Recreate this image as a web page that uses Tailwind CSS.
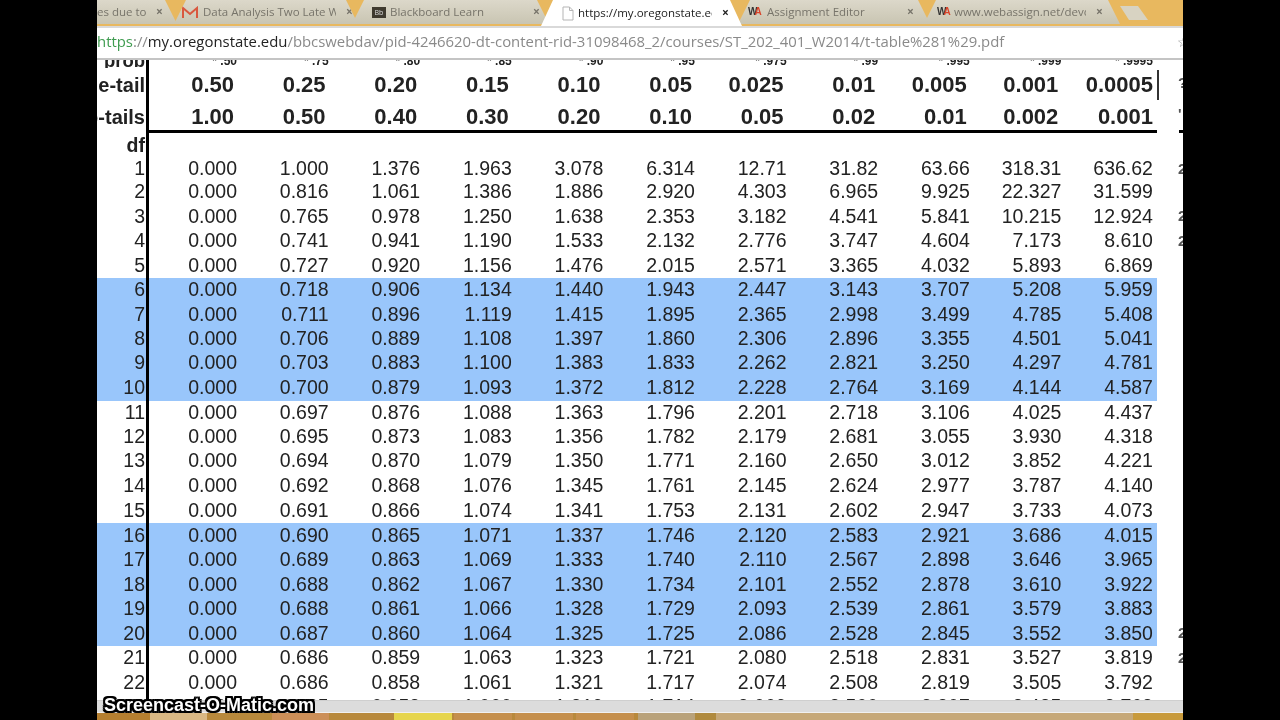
<!DOCTYPE html>
<html lang="en">
<head>
    <meta charset="UTF-8">
    <title>t-table</title>
    <script src="https://cdn.jsdelivr.net/npm/@tailwindcss/browser@4"></script>
</head>
<body class="bg-black h-screen w-screen overflow-hidden font-['Liberation_Sans',sans-serif]">
<main class="relative w-[1086px] h-[720px] ml-[97px] bg-white flex flex-col overflow-hidden blur-[0.35px]">

    <!-- tab strip -->
    <header class="relative h-[26px] shrink-0 bg-[#e8b85f] flex overflow-hidden font-['Open_Sans',sans-serif] text-[11.5px] text-[#77746a] whitespace-nowrap">
        <div class="w-[80px] h-[24px] shrink-0 bg-gradient-to-b from-[#dcd8ca] to-[#c9c5b2] [clip-path:polygon(0_0,68px_0,80px_100%,0_100%)] flex items-center">
            <span class="w-[49px] overflow-hidden">es due to</span>
            <span class="ml-[10px] font-bold text-[12px]">×</span>
        </div>
        <div class="w-[184px] h-[24px] -ml-[3px] shrink-0 bg-gradient-to-b from-[#dcd8ca] to-[#c9c5b2] [clip-path:polygon(0_100%,12px_0,172px_0,184px_100%)] flex items-center">
            <svg class="ml-[8px] w-[16px] h-[13px] shrink-0" viewBox="0 0 16 13"><path d="M1 12V2l7 6 7-6v10" fill="none" stroke="#d9583f" stroke-width="2"/></svg>
            <span class="ml-[5px] w-[133px] overflow-hidden">Data Analysis Two Late W</span>
            <span class="ml-[10px] font-bold text-[12px]">×</span>
        </div>
        <div class="w-[197px] h-[24px] -ml-[6px] shrink-0 bg-gradient-to-b from-[#dcd8ca] to-[#c9c5b2] [clip-path:polygon(0_100%,12px_0,185px_0,197px_100%)] flex items-center">
            <span class="ml-[20px] w-[14px] h-[11px] shrink-0 bg-[#3f3a2f] text-[7px] leading-[11px] text-[#ddd] text-center">Bb</span>
            <span class="ml-[4px] w-[143px]">Blackboard Learn</span>
            <span class="font-bold text-[12px]">×</span>
        </div>
        <div class="relative z-10 w-[201px] h-[26px] -ml-[8px] shrink-0 bg-white [clip-path:polygon(0_100%,12px_0,189px_0,201px_100%)] flex items-center text-[#222]">
            <svg class="ml-[21px] w-[12px] h-[15px] shrink-0" viewBox="0 0 12 15"><path d="M1 1h6.5L11 4.5V14H1zM7.5 1v3.500H11" fill="#fff" stroke="#b5b5b5"/></svg>
            <span class="ml-[4px] w-[134px] overflow-hidden">https://my.oregonstate.ec</span>
            <span class="ml-[10px] font-bold text-[12px]">×</span>
        </div>
        <div class="w-[192px] h-[24px] -ml-[4px] shrink-0 bg-gradient-to-b from-[#dcd8ca] to-[#c9c5b2] [clip-path:polygon(0_100%,12px_0,180px_0,192px_100%)] flex items-center">
            <span class="ml-[10px] w-[15px] shrink-0 font-['Liberation_Sans'] font-bold text-[10px] leading-none"><span class="text-[#333]">W</span><span class="-ml-[3px] text-[#d9452b]">A</span></span>
            <span class="ml-[4px] w-[140px]">Assignment Editor</span>
            <span class="font-bold text-[12px]">×</span>
        </div>
        <div class="w-[196px] h-[24px] -ml-[6px] shrink-0 bg-gradient-to-b from-[#dcd8ca] to-[#c9c5b2] [clip-path:polygon(0_100%,12px_0,184px_0,196px_100%)] flex items-center">
            <span class="ml-[13px] w-[15px] shrink-0 font-['Liberation_Sans'] font-bold text-[10px] leading-none"><span class="text-[#333]">W</span><span class="-ml-[3px] text-[#d9452b]">A</span></span>
            <span class="ml-[2px] w-[132px] overflow-hidden">www.webassign.net/devo</span>
            <span class="ml-[10px] font-bold text-[12px]">×</span>
        </div>
        <div class="w-[28px] h-[14px] mt-[6px] shrink-0 bg-[#d8d3c2] [clip-path:polygon(0_0,18px_0,28px_100%,9px_100%)]"></div>
    </header>

    <!-- address bar -->
    <div class="relative h-[34px] shrink-0 bg-white border-t-[2px] border-t-[#d9d9d9] border-b-[2px] border-b-[#c4c4c4] flex items-center pb-[3px] font-['Open_Sans',sans-serif] text-[14.9px] text-[#8a8a8a] whitespace-nowrap">
        <span><span class="text-[#3f9c50]">https</span>://<span class="text-[#222]">my.oregonstate.edu</span>/bbcswebdav/pid-4246620-dt-content-rid-31098468_2/courses/ST_202_401_W2014/t-table%281%29.pdf</span>
        <span class="absolute left-[1080px] text-[14px] text-[#999]">☆</span>
    </div>

    <!-- pdf page, rows are added by the script below -->
    <section id="page" class="h-[640px] shrink-0 overflow-hidden text-[#222]"></section>

    <!-- pdf viewer bottom edge + windows taskbar -->
    <div class="h-[13px] shrink-0 bg-[#dcdcdc] border-t border-t-[#cfcfcf] border-b border-b-[#f0f0f0]"></div>
    <footer class="h-[7px] shrink-0 bg-[#b8893c] flex">
        <div class="w-[53px] bg-[#b57f30]"></div>
        <div class="w-[57px] bg-[#d9b884]"></div>
        <div class="w-[65px]"></div>
        <div class="w-[57px] bg-[#cc8f58]"></div>
        <div class="w-[65px]"></div>
        <div class="w-[58px] bg-[#e6d54c]"></div>
        <div class="w-[58px] ml-[2px] bg-[#c58f4c]"></div>
        <div class="w-[58px] ml-[3px] bg-[#c58f4c]"></div>
        <div class="w-[58px] ml-[3px] bg-[#c58f4c]"></div>
        <div class="w-[57px] ml-[4px] bg-[#b9a27a]"></div>
        <div class="w-[21px] bg-[#b08a3e]"></div>
        <div class="flex-1 bg-[#c6a878]"></div>
        <div class="w-[50px] bg-[#c89a3c]"></div>
    </footer>

    <!-- stray table border next to 0.0005 -->
    <div class="absolute left-[1060px] top-[70px] w-[2px] h-[30px] bg-[#333]"></div>

    <div class="absolute left-[7px] top-[697px] font-bold text-[18px] leading-[17px] text-white [text-shadow:-2px_0_0_#000,2px_0_0_#000,0_-2px_0_#000,0_2px_0_#000,-2px_-2px_0_#000,2px_-2px_0_#000,-2px_2px_0_#000,2px_2px_0_#000]">Screencast-O-Matic.com</div>
</main>

<script>
const rows = [
    ['1','0.000','1.000','1.376','1.963','3.078','6.314','12.71','31.82','63.66','318.31','636.62'],
    ['2','0.000','0.816','1.061','1.386','1.886','2.920','4.303','6.965','9.925','22.327','31.599'],
    ['3','0.000','0.765','0.978','1.250','1.638','2.353','3.182','4.541','5.841','10.215','12.924'],
    ['4','0.000','0.741','0.941','1.190','1.533','2.132','2.776','3.747','4.604','7.173','8.610'],
    ['5','0.000','0.727','0.920','1.156','1.476','2.015','2.571','3.365','4.032','5.893','6.869'],
    ['6','0.000','0.718','0.906','1.134','1.440','1.943','2.447','3.143','3.707','5.208','5.959'],
    ['7','0.000','0.711','0.896','1.119','1.415','1.895','2.365','2.998','3.499','4.785','5.408'],
    ['8','0.000','0.706','0.889','1.108','1.397','1.860','2.306','2.896','3.355','4.501','5.041'],
    ['9','0.000','0.703','0.883','1.100','1.383','1.833','2.262','2.821','3.250','4.297','4.781'],
    ['10','0.000','0.700','0.879','1.093','1.372','1.812','2.228','2.764','3.169','4.144','4.587'],
    ['11','0.000','0.697','0.876','1.088','1.363','1.796','2.201','2.718','3.106','4.025','4.437'],
    ['12','0.000','0.695','0.873','1.083','1.356','1.782','2.179','2.681','3.055','3.930','4.318'],
    ['13','0.000','0.694','0.870','1.079','1.350','1.771','2.160','2.650','3.012','3.852','4.221'],
    ['14','0.000','0.692','0.868','1.076','1.345','1.761','2.145','2.624','2.977','3.787','4.140'],
    ['15','0.000','0.691','0.866','1.074','1.341','1.753','2.131','2.602','2.947','3.733','4.073'],
    ['16','0.000','0.690','0.865','1.071','1.337','1.746','2.120','2.583','2.921','3.686','4.015'],
    ['17','0.000','0.689','0.863','1.069','1.333','1.740','2.110','2.567','2.898','3.646','3.965'],
    ['18','0.000','0.688','0.862','1.067','1.330','1.734','2.101','2.552','2.878','3.610','3.922'],
    ['19','0.000','0.688','0.861','1.066','1.328','1.729','2.093','2.539','2.861','3.579','3.883'],
    ['20','0.000','0.687','0.860','1.064','1.325','1.725','2.086','2.528','2.845','3.552','3.850'],
    ['21','0.000','0.686','0.859','1.063','1.323','1.721','2.080','2.518','2.831','3.527','3.819'],
    ['22','0.000','0.686','0.858','1.061','1.321','1.717','2.074','2.508','2.819','3.505','3.792'],
    ['23','0.000','0.685','0.858','1.060','1.319','1.714','2.069','2.500','2.807','3.485','3.768'],
];
const prob = ['prob','* .50','* .75','* .80','* .85','* .90','* .95','* .975','* .99','* .995','* .999','* .9995'];
const one = ['one-tail','0.50','0.25','0.20','0.15','0.10','0.05','0.025','0.01','0.005','0.001','0.0005'];
const two = ['two-tails','1.00','0.50','0.40','0.30','0.20','0.10','0.05','0.02','0.01','0.002','0.001'];
const smudge = ['1','3','4','20','21'];

const page = document.getElementById('page');
const gridCls = 'grid shrink-0 grid-cols-[52px_88px_repeat(10,91.6px)] w-[1060px] ';
const dfCls = 'flex items-center justify-end pr-[1px] border-r-[3px] border-black overflow-hidden whitespace-nowrap ';

function addRow(cells, height, bg, dfExtra, cellCls, mark) {
    const row = document.createElement('div');
    row.className = 'flex ' + height;
    const grid = document.createElement('div');
    grid.className = gridCls + height + ' ' + bg;
    cells.forEach((text, i) => {
        const c = document.createElement('div');
        c.className = i === 0 ? dfCls + dfExtra : cellCls;
        c.textContent = text;
        grid.appendChild(c);
    });
    row.appendChild(grid);
    if (mark) {
        const m = document.createElement('span');
        m.className = 'ml-[21px] self-center text-[15px] font-bold text-[#555]';
        m.textContent = mark;
        row.appendChild(m);
    }
    page.appendChild(row);
}

addRow(prob, 'h-[8px]', '', 'font-bold text-[18.500px] leading-[9px] !items-start -mt-[4px] h-[12px]', 'flex items-start justify-end -mt-[3px] text-[12px] leading-[9px] font-bold');
addRow(one, 'h-[30px]', '', 'font-bold text-[20px]', 'flex items-center justify-end pr-[3px] font-bold text-[22px] last:pr-0', '?');
addRow(two, 'h-[32px]', '', 'pt-[2px] font-bold text-[20px]', 'flex items-center justify-end pt-[2px] pr-[3px] font-bold text-[22px] last:pr-0', "'");

// thick rule under the header
page.insertAdjacentHTML('beforeend', `
    <div class="flex h-[3px]">
        <div class="w-[52px] border-r-[3px] border-black"></div>
        <div class="w-[1008px] bg-black"></div>
        <div class="ml-[22px] w-[4px] bg-black"></div>
    </div>`);

addRow(['df'], 'h-[24.500px]', '', 'font-bold text-[19.500px]', 'flex');
rows.forEach((r, i) => {
    const inBlue = (i >= 5 && i <= 9) || (i >= 15 && i <= 19);
    let h = 'h-[24.470px]';
    let pad = '';
    if (i === 0) h = 'h-[23px]';
    if (i === 1) { h = 'h-[23.700px]'; pad = 'pb-[1px] '; } // second row sits a bit high in the pdf
    if (i === 9 || i === 14) h = 'h-[25.470px]'; // blue bands end a pixel later than the rows
    if (i === 10) h = 'h-[23.470px]';
    addRow(r, h, inBlue ? 'bg-[#99c6fb]' : '', pad + 'leading-none text-[19.5px]', pad + 'flex items-center justify-end leading-none text-[19.5px]', smudge.includes(r[0]) ? '2' : '');
});
</script>
</body>
</html>
